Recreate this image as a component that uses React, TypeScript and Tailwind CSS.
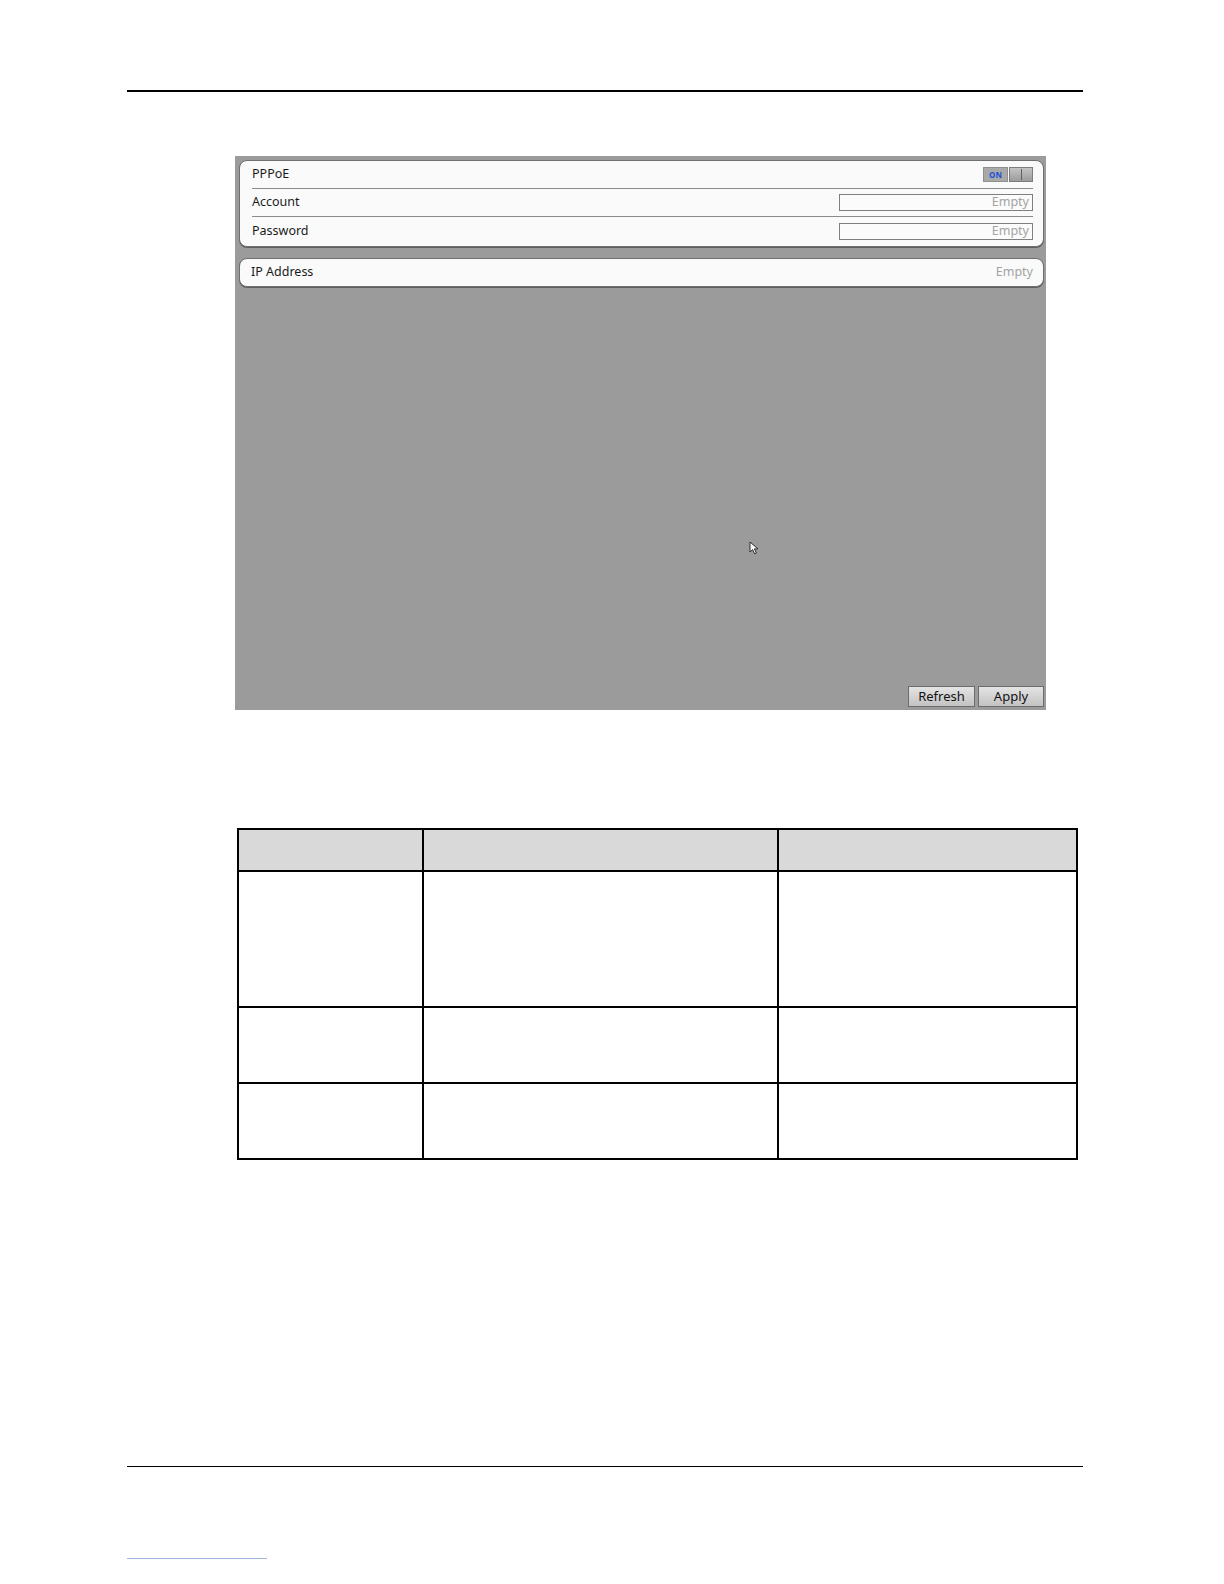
import React from "react";

const uiFont = { fontFamily: '"Noto Sans", "Open Sans", "DejaVu Sans", sans-serif' };

function Toggle() {
  return (
    <div className="flex h-[15px] w-[50px] items-stretch">
      <div className="flex w-[25px] items-center justify-center bg-[#a9a9a9] border border-[#8f8f8f]">
        <span className="text-[8px] font-bold leading-none text-[#1d4fd6]" style={uiFont}>ON</span>
      </div>
      <div className="ml-[1px] flex flex-1 items-center justify-center bg-gradient-to-b from-[#c4c4c4] to-[#9c9c9c] border border-[#7d7d7d]">
        <div className="h-[11px] w-[1px] bg-[#5f5f5f]" />
      </div>
    </div>
  );
}

function EmptyInput() {
  return (
    <div className="flex h-[17px] w-[194px] items-center justify-end border border-[#7f7f7f] bg-[#fbfbfb] pr-[3px]">
      <span className="text-[12.5px] leading-none text-[#a3a3a3]" style={uiFont}>Empty</span>
    </div>
  );
}

function Row({ label, right, last }: { label: string; right: React.ReactNode; last?: boolean }) {
  return (
    <div className={`mr-[10px] ml-[12px] flex h-[28px] items-center justify-between ${last ? "" : "border-b border-[#8a8a8a]"}`}>
      <span className="text-[12.5px] text-[#1a1a1a]" style={uiFont}>{label}</span>
      {right}
    </div>
  );
}

function Btn({ label, w }: { label: string; w: string }) {
  return (
    <div className={`flex h-[21px] ${w} items-center justify-center border border-[#6c6c6c] bg-gradient-to-b from-[#e4e4e4] to-[#c2c2c2]`}>
      <span className="text-[13px] leading-none text-[#111]" style={uiFont}>{label}</span>
    </div>
  );
}

export default function App() {
  return (
    <div className="relative h-[1584px] w-[1224px] overflow-hidden bg-white">
      <div className="ml-[127px] mt-[90px] h-[2px] w-[956px] bg-black" />

      {/* device screenshot */}
      <div className="relative ml-[235px] mt-[64px] flex h-[554px] w-[811px] flex-col bg-[#9b9b9b] pl-[4px] pr-[2px] pt-[4px] pb-[3px]">
        <div className="rounded-[8px] border border-[#6f6f6f] bg-[#fafafa] pb-[1px] shadow-[0_1px_0_#5f5f5f]">
          <Row label="PPPoE" right={<Toggle />} />
          <Row label="Account" right={<EmptyInput />} />
          <Row label="Password" right={<EmptyInput />} last />
        </div>
        <div className="mt-[11px] flex h-[29px] items-center justify-between rounded-[8px] border border-[#6f6f6f] bg-[#fafafa] pl-[11px] pr-[10px] shadow-[0_1px_0_#5f5f5f]">
          <span className="text-[12.5px] text-[#1a1a1a]" style={uiFont}>IP Address</span>
          <span className="text-[12.5px] text-[#a3a3a3]" style={uiFont}>Empty</span>
        </div>
        <div className="flex-1" />
        <div className="flex justify-end gap-[3px]">
          <Btn label="Refresh" w="w-[67px]" />
          <Btn label="Apply" w="w-[66px]" />
        </div>

        {/* mouse cursor */}
        <svg className="absolute left-[514px] top-[385px]" width="12" height="14" viewBox="0 0 12 14">
          <path d="M1 1 L1 11 L3.6 8.6 L5.6 12.8 L7.4 12 L5.4 7.9 L9 7.9 Z" fill="#ffffff" stroke="#2a2a2a" strokeWidth="1" />
        </svg>
      </div>

      {/* table */}
      <div className="ml-[237px] mt-[118px] w-[841px] border-2 border-black">
        <div className="grid h-[42px] grid-cols-[185px_355px_1fr] border-b-2 border-black bg-[#d9d9d9]">
          <div className="border-r-2 border-black" />
          <div className="border-r-2 border-black" />
          <div />
        </div>
        <div className="grid h-[136px] grid-cols-[185px_355px_1fr] border-b-2 border-black">
          <div className="border-r-2 border-black" />
          <div className="border-r-2 border-black" />
          <div />
        </div>
        <div className="grid h-[76px] grid-cols-[185px_355px_1fr] border-b-2 border-black">
          <div className="border-r-2 border-black" />
          <div className="border-r-2 border-black" />
          <div />
        </div>
        <div className="grid h-[74px] grid-cols-[185px_355px_1fr]">
          <div className="border-r-2 border-black" />
          <div className="border-r-2 border-black" />
          <div />
        </div>
      </div>

      <div className="ml-[127px] mt-[306px] h-[1px] w-[956px] bg-black" />
      <div className="ml-[127px] mt-[91px] h-[1px] w-[140px] bg-[#9fb4e0]" />
    </div>
  );
}
